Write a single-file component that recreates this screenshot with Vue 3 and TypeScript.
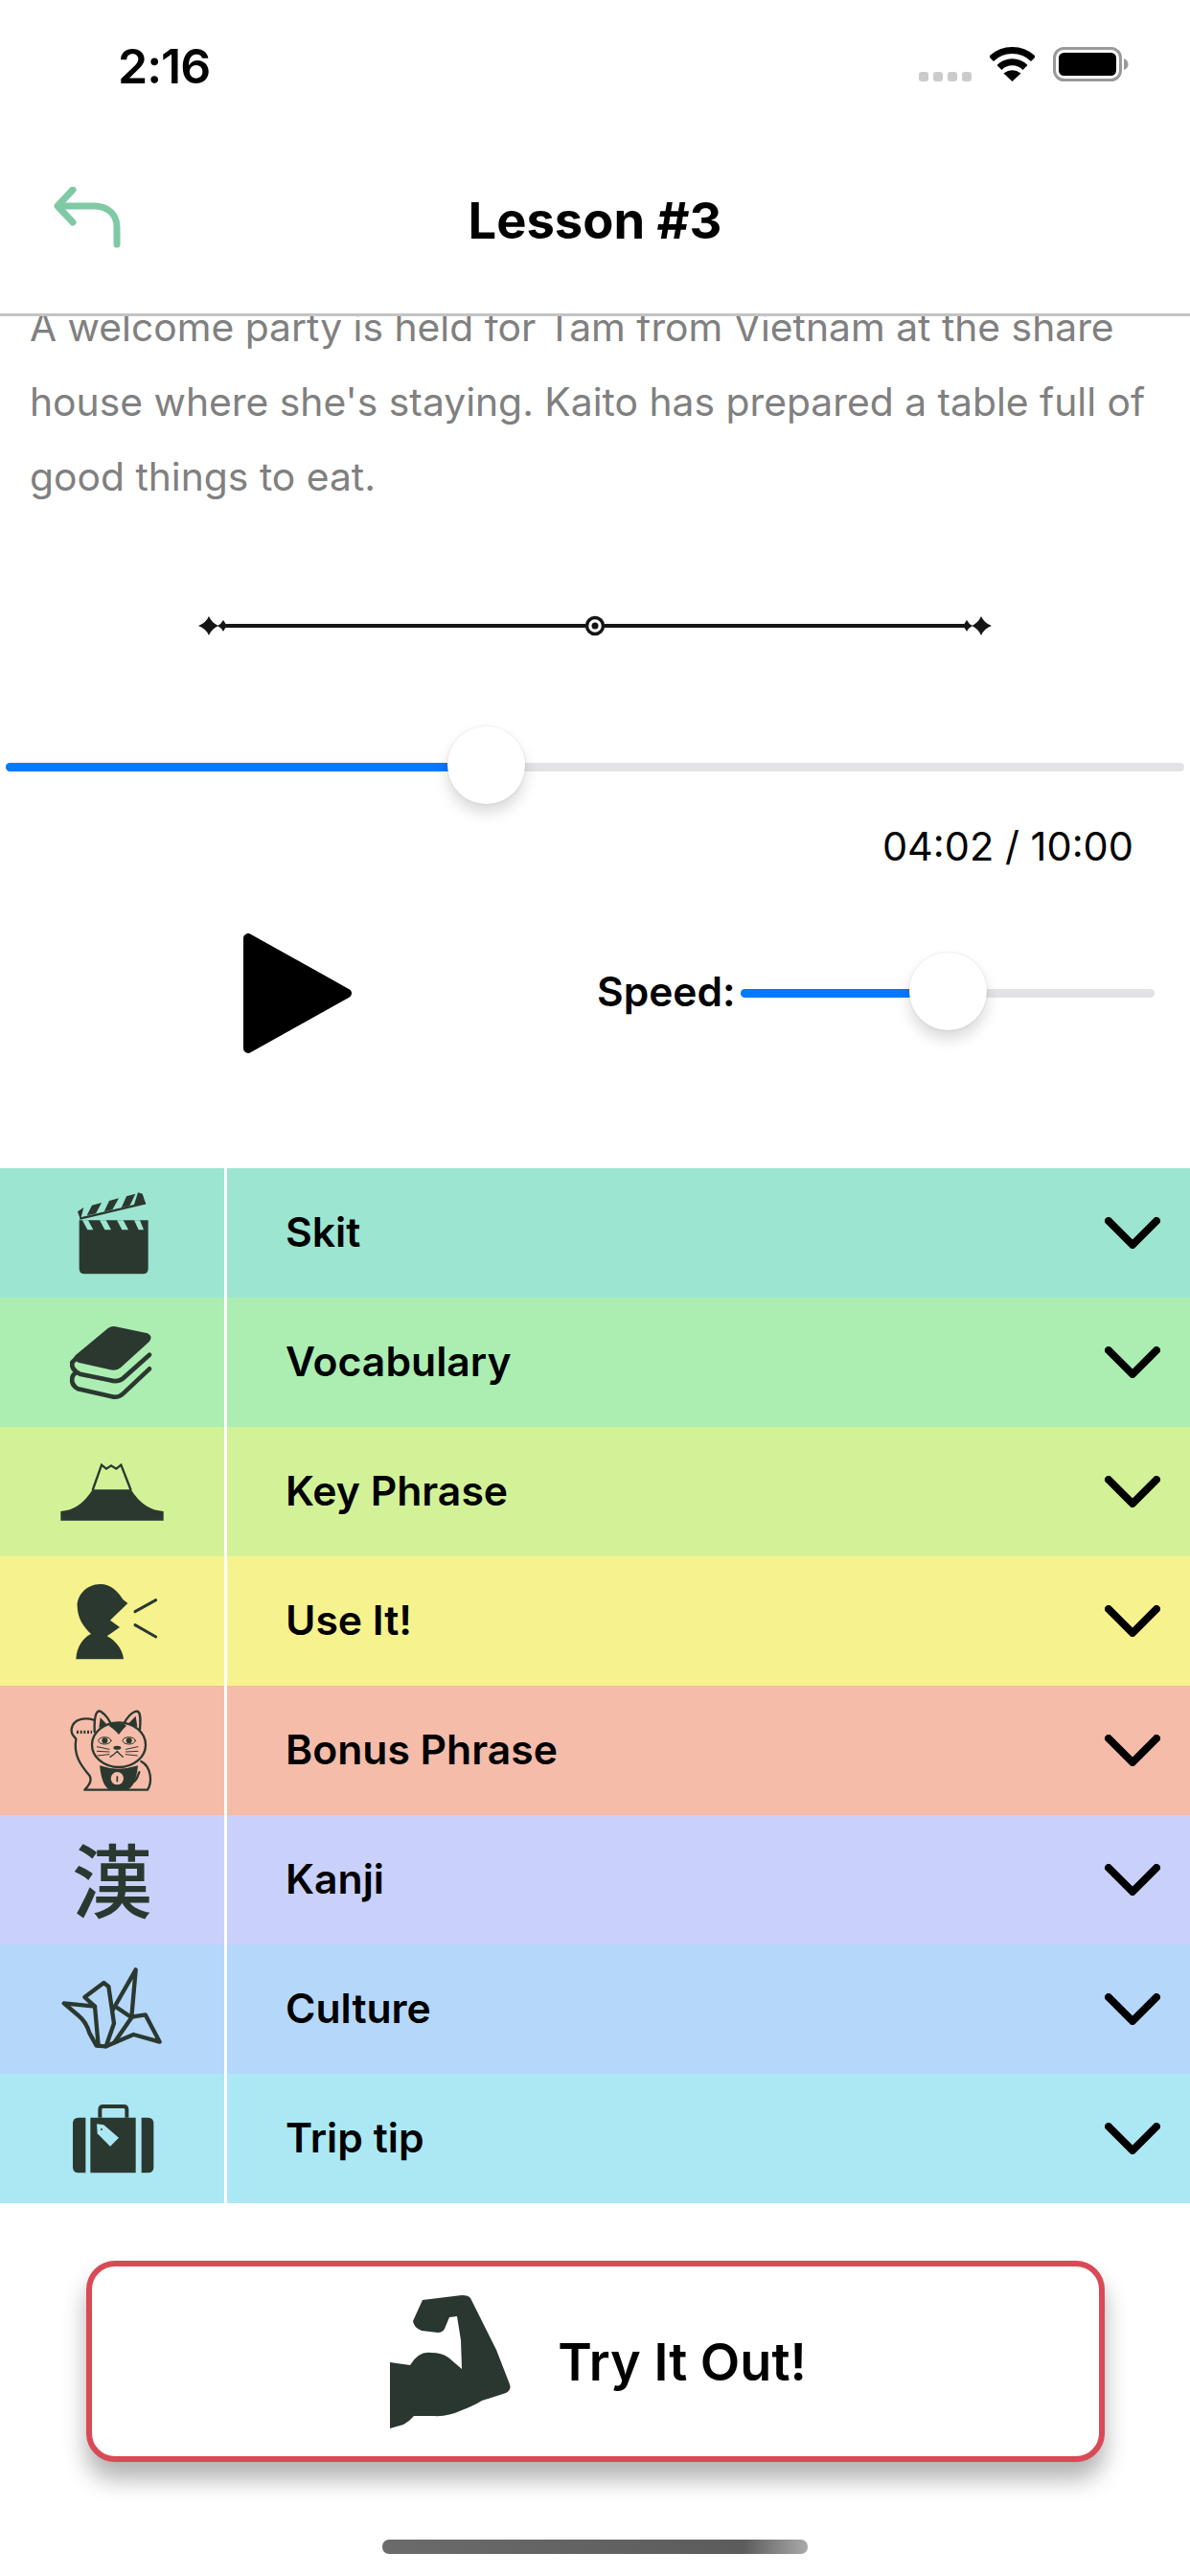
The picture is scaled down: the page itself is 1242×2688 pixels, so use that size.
<script setup lang="ts">
interface Section {
  id: string
  label: string
  color: string
}

const sections: Section[] = [
  { id: 'skit', label: 'Skit', color: '#9ce5d0' },
  { id: 'vocab', label: 'Vocabulary', color: '#aceeb2' },
  { id: 'phrase', label: 'Key Phrase', color: '#d3f298' },
  { id: 'use', label: 'Use It!', color: '#f6f38e' },
  { id: 'bonus', label: 'Bonus Phrase', color: '#f5bca9' },
  { id: 'kanji', label: 'Kanji', color: '#c9d1fb' },
  { id: 'culture', label: 'Culture', color: '#b5d7f9' },
  { id: 'trip', label: 'Trip tip', color: '#ace8f4' }
]

const elapsed = 242
const total = 600
// native slider keeps the thumb inside the track, so it isn't quite elapsed / total
const progress = 40.8
const speed = 50

const fmt = (s: number) =>
  String(Math.floor(s / 60)).padStart(2, '0') + ':' + String(s % 60).padStart(2, '0')
</script>

<template>
  <div class="page">
    <div class="status">
      <span class="clock">2:16</span>
      <div class="status-icons">
        <div class="dots"><i></i><i></i><i></i><i></i></div>
        <svg class="wifi" width="47" height="36" viewBox="0 0 47 36">
          <path d="M1.5 12.5A31.5 31.5 0 0 1 45.5 12.5" fill="none" stroke="#000" stroke-width="7" />
          <path d="M10 21.5A19 19 0 0 1 37 21.5" fill="none" stroke="#000" stroke-width="7" />
          <path d="M23.5 36L14.5 27.5Q23.5 21 32.5 27.5Z" fill="#000" />
        </svg>
        <svg class="battery" width="79" height="36" viewBox="0 0 79 36">
          <rect x="1.5" y="1.5" width="69" height="33" rx="10" fill="none" stroke="#999" stroke-width="3" />
          <rect x="6" y="6" width="60" height="24" rx="5.5" fill="#000" />
          <path d="M74 12Q78.5 14 78.5 18T74 24Z" fill="#999" />
        </svg>
      </div>
    </div>

    <header class="nav">
      <svg class="back" width="70" height="66" viewBox="0 0 70 66">
        <path d="M20 3L4 20L20 37M5 20H42C56 20 66 28 66 42V60" fill="none" stroke="#7fcaa5" stroke-width="7" stroke-linecap="round" stroke-linejoin="round" />
      </svg>
      <h1>Lesson #3</h1>
    </header>

    <div class="intro">
      <p>A welcome party is held for Tam from Vietnam at the share house where she's staying. Kaito has prepared a table full of good things to eat.</p>
    </div>

    <svg class="ornament" width="830" height="22" viewBox="0 0 830 22">
      <path d="M1 11Q9 8 12 1Q15 8 22 11Q15 14 12 21Q9 14 1 11Z" fill="#151515" />
      <path d="M21 11Q25 9 27 5Q29 9 32 11Q29 13 27 17Q25 13 21 11Z" fill="#151515" />
      <path d="M30 11H405M425 11H800" stroke="#151515" stroke-width="4" />
      <circle cx="415" cy="11" r="8.5" fill="#fff" stroke="#151515" stroke-width="3.5" />
      <circle cx="415" cy="11" r="3.5" fill="#151515" />
      <path d="M829 11Q821 8 818 1Q815 8 808 11Q815 14 818 21Q821 14 829 11Z" fill="#151515" />
      <path d="M809 11Q805 9 803 5Q801 9 798 11Q801 13 803 17Q805 13 809 11Z" fill="#151515" />
    </svg>

    <div class="track main-track">
      <div class="fill" :style="{ width: progress + '%' }"></div>
      <div class="thumb" :style="{ left: progress + '%' }"></div>
    </div>

    <div class="time">{{ fmt(elapsed) }} / {{ fmt(total) }}</div>

    <div class="controls">
      <svg class="play" width="113" height="125" viewBox="0 0 113 125">
        <path d="M5 5V120L108 62.5Z" fill="#000" stroke="#000" stroke-width="10" stroke-linejoin="round" />
      </svg>
      <span class="speed-label">Speed:</span>
      <div class="track speed-track">
        <div class="fill" :style="{ width: speed + '%' }"></div>
        <div class="thumb" :style="{ left: speed + '%' }"></div>
      </div>
    </div>

    <div class="sections">
      <div v-for="s in sections" :key="s.id" class="row" :style="{ background: s.color }">
        <div class="icon-cell">
          <svg v-if="s.id === 'skit'" width="234" height="135" viewBox="0 24 702 405">
            <path d="M248 187H464V338Q464 355 447 355H265Q248 355 248 338Z" fill="#2b3830" />
            <path d="M258 187H276L292 217H274ZM312 187H332L348 217H328ZM366 187H386L402 217H382ZM420 187H438L450 217H434Z" :fill="s.color" />
            <path d="M243 160L262 147L252 185ZM288 140L318 132L300 166L272 172ZM342 126L372 118L352 154L326 160ZM396 112L424 104L406 142L380 148ZM432 100L446 104L456 134L418 144Z" fill="#2b3830" />
            <path d="M250 182L456 133" stroke="#2b3830" stroke-width="7" />
          </svg>
          <svg v-else-if="s.id === 'vocab'" width="234" height="135" viewBox="0 429 702 405">
            <path d="M338 525Q350 517 362 520L462 541Q480 550 468 566L378 648Q365 660 345 655L245 632Q225 622 236 610Z" fill="#2b3830" />
            <path d="M468 608L385 682Q368 695 345 688L250 668Q222 655 226 632L240 618" fill="none" stroke="#2b3830" stroke-width="14" stroke-linecap="round" />
            <path d="M468 652L385 730Q370 744 350 739L245 715Q222 704 226 680Q228 670 238 664" fill="none" stroke="#2b3830" stroke-width="14" stroke-linecap="round" />
          </svg>
          <svg v-else-if="s.id === 'phrase'" width="234" height="135" viewBox="0 834 702 405">
            <path d="M190 1127V1098Q250 1095 290 1030H410Q450 1095 512 1098V1127Z" fill="#2b3830" />
            <path d="M290 1032L318 953L333 965L348 955L364 965L379 953L410 1032" fill="none" stroke="#2b3830" stroke-width="7" />
          </svg>
          <svg v-else-if="s.id === 'use'" width="234" height="135" viewBox="0 40 702 405">
            <path d="M315 127C268 127 240 165 242 197C243 235 262 262 285 283C258 296 240 325 238 362H387C385 335 365 305 335 290L375 262L345 240L400 187L385 175C370 150 345 127 315 127Z" fill="#2b3830" />
            <path d="M423 213L488 177M423 255L488 292" stroke="#2b3830" stroke-width="9" stroke-linecap="round" />
          </svg>
          <svg v-else-if="s.id === 'bonus'" width="234" height="135" viewBox="0 445 702 405">
            <g fill="none" stroke="#2b3830" stroke-width="7" stroke-linecap="round" stroke-linejoin="round">
              <path d="M293 552C270 545 230 545 224 580C221 600 235 605 238 612C230 660 250 690 275 720C290 735 285 750 265 771H462C476 750 476 700 442 682" />
              <path d="M296 590C294 530 305 520 316 526C330 535 345 555 350 572" />
              <path d="M385 570C395 545 415 525 430 525C442 530 440 555 438 582" />
              <ellipse cx="372" cy="630" rx="84" ry="70" />
              <path d="M345 668Q358 660 367 650Q375 660 385 668" stroke-width="4" />
              <path d="M304 636L342 644M304 650L342 652M306 664L342 660M432 636L394 644M432 650L394 652M430 664L394 660" stroke-width="3" />
              <ellipse cx="328" cy="617" rx="20" ry="11" stroke-width="3" />
              <ellipse cx="404" cy="617" rx="20" ry="11" stroke-width="3" />
              <path d="M240 590H288" stroke-width="10" stroke-dasharray="6 5" stroke-linecap="butt" />
              <path d="M415 748C430 742 430 727 436 716" />
            </g>
            <g fill="#2b3830">
              <path d="M310 577L314 545L336 567ZM400 566L425 540L430 574Z" />
              <path d="M340 570Q370 553 396 570Q385 580 372 598Q355 578 340 570Z" />
              <circle cx="328" cy="617" r="9" />
              <circle cx="404" cy="617" r="9" />
              <ellipse cx="367" cy="639" rx="12" ry="6" />
              <path d="M312 695Q320 770 350 772H395Q425 765 432 695Q370 715 312 695Z" />
            </g>
            <circle cx="367" cy="735" r="20" :fill="s.color" />
            <path d="M367 728V746" stroke="#2b3830" stroke-width="5" />
          </svg>
          <span v-else-if="s.id === 'kanji'" class="kanji">漢</span>
          <svg v-else-if="s.id === 'culture'" width="234" height="135" viewBox="0 383 702 405">
            <g fill="none" stroke="#2b3830" stroke-width="13" stroke-linejoin="round" stroke-linecap="round">
              <path d="M200 567L297 577L265 548L325 503L340 515L357 630L332 702L302 700L280 660Q270 625 245 605Z" />
              <path d="M297 577L308 700" />
              <path d="M352 590L425 462L412 610L455 603L500 688L418 665L332 702" />
              <path d="M368 582L412 612L358 690" />
            </g>
          </svg>
          <svg v-else width="234" height="135" viewBox="0 788 702 405">
            <path d="M268 925V1098H246Q228 1098 228 1080V943Q228 925 246 925ZM283 925H425V1098H283ZM443 925H463Q481 925 481 943V1080Q481 1098 463 1098H443Z" fill="#2b3830" />
            <path d="M313 925V900Q313 890 323 890H387Q397 890 397 900V925" fill="none" stroke="#2b3830" stroke-width="12" />
            <path d="M303 945L325 948L372 988L345 1015L305 975Z" :fill="s.color" />
            <circle cx="318" cy="962" r="3" fill="#2b3830" />
          </svg>
        </div>
        <span class="row-label">{{ s.label }}</span>
        <svg class="chevron" width="58" height="33" viewBox="0 0 58 33">
          <path d="M4 4L29 29L54 4" fill="none" stroke="#000" stroke-width="8" stroke-linecap="round" stroke-linejoin="round" />
        </svg>
      </div>
    </div>

    <button class="try-btn" type="button">
      <svg width="127" height="139" viewBox="0 0 127 139">
        <path d="M0 139V70L21 73Q30 58 43 60Q54 60 61 65L75 77L74 47L70 22L62 23L57 35Q55 39 50 39L33 37Q25 34 24 27L34 5L75 0Q82 0 84 3L111 57L125 93Q127 99 121 102L96 110Q88 115 75 120Q60 127 46 126H25Q20 132 14 135Z" fill="#2a3630" />
      </svg>
      <span>Try It Out!</span>
    </button>

    <div class="home-bar"></div>
  </div>
</template>

<style scoped>
.page {
  width: 1242px;
  height: 2688px;
  overflow: hidden;
  background: #fff;
  font-family: Inter, "Liberation Sans", sans-serif;
  color: #000;
}

.status {
  height: 110px;
  box-sizing: border-box;
  padding: 49px 64px 0 123px;
  display: flex;
  justify-content: space-between;
  align-items: flex-start;
}

.clock {
  margin-top: 2px;
  font-size: 50px;
  font-weight: 600;
  line-height: 36px;
  letter-spacing: -1px;
}

.status-icons {
  display: flex;
  align-items: flex-end;
}

.dots {
  display: flex;
  gap: 5px;
}

.dots i {
  width: 10px;
  height: 10px;
  border-radius: 3px;
  background: #cbcbcb;
}

.wifi {
  margin-left: 19px;
}

.battery {
  margin-left: 19px;
}

.nav {
  height: 220px;
  box-sizing: border-box;
  border-bottom: 3px solid #c4c4c4;
  display: flex;
  align-items: center;
  justify-content: center;
  position: relative;
}

.nav h1 {
  margin: 23px 0 0;
  font-size: 52.5px;
  font-weight: 650;
}

.back {
  position: absolute;
  left: 56px;
  top: 85px;
}

.intro {
  overflow: hidden;
  height: 207px;
  padding: 0 31px;
}

.intro p {
  margin: -28px 0 0;
  font-size: 40.8px;
  line-height: 78px;
  color: #808080;
}

.ornament {
  display: block;
  margin: 105px auto 0;
}

.track {
  position: relative;
  height: 9px;
  border-radius: 5px;
  background: #e3e3e5;
}

.fill {
  height: 100%;
  border-radius: 5px;
  background: #007aff;
}

.thumb {
  position: absolute;
  top: -38px;
  width: 81px;
  height: 81px;
  margin-left: -40.5px;
  border-radius: 50%;
  background: #fff;
  box-shadow: 0 9px 15px rgba(0, 0, 0, 0.15), 0 0 3px rgba(0, 0, 0, 0.1);
}

.main-track {
  margin: 132px 6px 0;
}

.time {
  margin-top: 53px;
  padding-right: 59px;
  text-align: right;
  font-size: 41.5px;
  line-height: 50px;
}

.controls {
  margin-top: 66px;
  padding-left: 254px;
  display: flex;
  align-items: center;
}

.play {
  flex: none;
}

.speed-label {
  margin: 0 0 5px 256px;
  width: 150px;
  font-size: 42.5px;
  font-weight: 600;
}

.speed-track {
  width: 432px;
}

.sections {
  margin-top: 120px;
}

.row {
  height: 135px;
  display: flex;
  align-items: center;
}

.icon-cell {
  width: 234px;
  height: 100%;
  border-right: 3px solid #fff;
  display: flex;
  align-items: center;
  justify-content: center;
  flex: none;
}

.kanji {
  margin-bottom: 6px;
  font-family: "Noto Sans CJK JP", sans-serif;
  font-size: 84px;
  font-weight: 500;
  line-height: 1;
  color: #2b3830;
}

.row-label {
  margin: 0 0 3px 61px;
  flex: 1;
  font-size: 42.7px;
  font-weight: 600;
}

.chevron {
  margin-right: 31px;
}

.try-btn {
  display: flex;
  align-items: center;
  justify-content: center;
  gap: 48px;
  width: 1063px;
  height: 210px;
  margin: 60px 0 0 90px;
  padding: 0 0 0 6px;
  box-sizing: border-box;
  border: 6px solid #d94a56;
  border-radius: 30px;
  background: #fff;
  box-shadow: 0 18px 24px rgba(0, 0, 0, 0.3);
  font-family: inherit;
  font-size: 54px;
  font-weight: 600;
  color: #000;
}

.home-bar {
  width: 444px;
  height: 15px;
  margin: 81px auto 0;
  border-radius: 7px;
  background: linear-gradient(90deg, #6b6b6b 0%, #5c5c5c 85%, #aaa 100%);
}
</style>

<style>
html,
body {
  background: #fff;
}
</style>
